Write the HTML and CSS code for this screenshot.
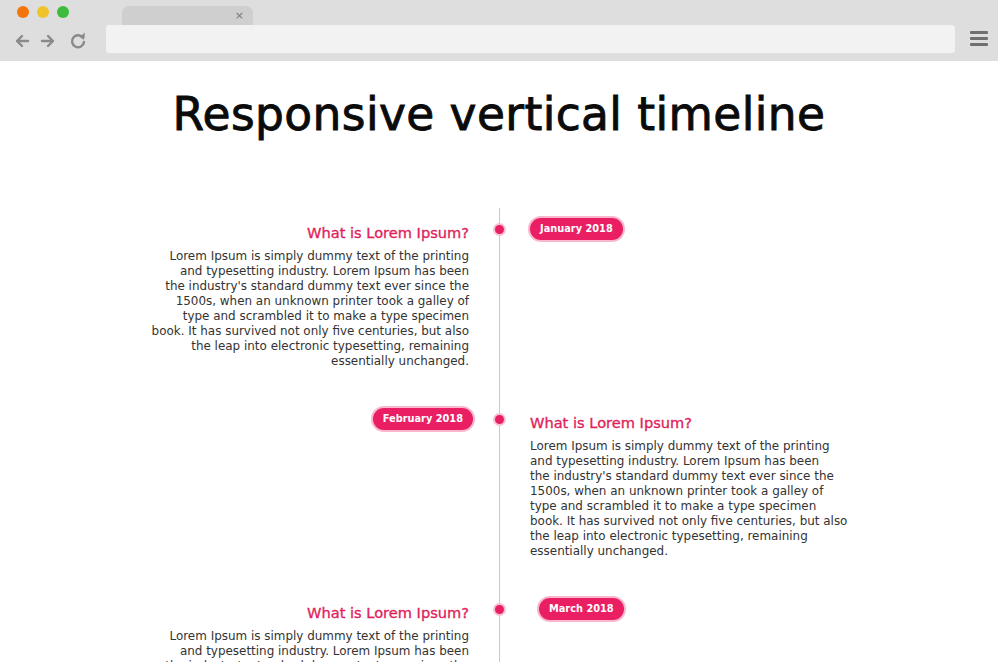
FILE: index.html
```html
<!DOCTYPE html>
<html lang="en">
<head>
<meta charset="utf-8">
<title>Responsive vertical timeline</title>
<link rel="stylesheet" href="styles.css">
</head>
<body>
<div class="chrome">
  <div class="chrome-top">
    <div class="lights">
      <span class="light red"></span>
      <span class="light yellow"></span>
      <span class="light green"></span>
    </div>
    <div class="tab"><span class="tab-close">×</span></div>
  </div>
  <div class="chrome-bar">
    <div class="nav">
      <svg class="nav-icon" width="16" height="16" viewBox="0 0 16 16"><path d="M14 8H3M8 3L3 8l5 5" fill="none" stroke="#8a8a8a" stroke-width="2.4" stroke-linecap="round" stroke-linejoin="round"/></svg>
      <svg class="nav-icon" width="16" height="16" viewBox="0 0 16 16"><path d="M2 8h11M8 3l5 5-5 5" fill="none" stroke="#8a8a8a" stroke-width="2.4" stroke-linecap="round" stroke-linejoin="round"/></svg>
      <svg class="nav-icon reload" width="18" height="18" viewBox="0 0 18 18"><path d="M14.2 6.2A6 6 0 1 0 15 10" fill="none" stroke="#8a8a8a" stroke-width="2.4" stroke-linecap="round"/><path d="M10.5 5.6h5.2V0.6z" fill="#8a8a8a"/></svg>
    </div>
    <div class="url"></div>
    <div class="menu"><span></span><span></span><span></span></div>
  </div>
</div>

<main class="page">
  <h1 class="title">Responsive vertical timeline</h1>

  <section class="timeline">
    <div class="item item-1">
      <div class="side left">
        <div class="content">
          <h2 class="heading">What is Lorem Ipsum?</h2>
          <p class="text">Lorem Ipsum is simply dummy text of the printing<br>and typesetting industry. Lorem Ipsum has been<br>the industry's standard dummy text ever since the<br>1500s, when an unknown printer took a galley of<br>type and scrambled it to make a type specimen<br>book. It has survived not only five centuries, but also<br>the leap into electronic typesetting, remaining<br>essentially unchanged.</p>
        </div>
      </div>
      <span class="dot"></span>
      <div class="side right">
        <span class="badge badge-jan">January 2018</span>
      </div>
    </div>

    <div class="item item-2">
      <div class="side left">
        <span class="badge badge-feb">February 2018</span>
      </div>
      <span class="dot"></span>
      <div class="side right">
        <div class="content">
          <h2 class="heading">What is Lorem Ipsum?</h2>
          <p class="text">Lorem Ipsum is simply dummy text of the printing<br>and typesetting industry. Lorem Ipsum has been<br>the industry's standard dummy text ever since the<br>1500s, when an unknown printer took a galley of<br>type and scrambled it to make a type specimen<br>book. It has survived not only five centuries, but also<br>the leap into electronic typesetting, remaining<br>essentially unchanged.</p>
        </div>
      </div>
    </div>

    <div class="item item-3">
      <div class="side left">
        <div class="content">
          <h2 class="heading">What is Lorem Ipsum?</h2>
          <p class="text">Lorem Ipsum is simply dummy text of the printing<br>and typesetting industry. Lorem Ipsum has been<br>the industry's standard dummy text ever since the<br>1500s, when an unknown printer took a galley of<br>type and scrambled it to make a type specimen<br>book. It has survived not only five centuries, but also<br>the leap into electronic typesetting, remaining<br>essentially unchanged.</p>
        </div>
      </div>
      <span class="dot"></span>
      <div class="side right">
        <span class="badge badge-mar">March 2018</span>
      </div>
    </div>
  </section>
</main>
</body>
</html>
```

FILE: styles.css
```css
* { box-sizing: border-box; }
html, body { margin: 0; padding: 0; }
body {
  width: 998px;
  height: 662px;
  overflow: hidden;
  background: #fff;
  font-family: "DejaVu Sans", sans-serif;
  color: #222;
}

/* Browser chrome */
.chrome {
  background: #dedede;
  height: 61px;
  display: flex;
  flex-direction: column;
}
.chrome-top {
  height: 25px;
  display: flex;
  align-items: flex-end;
}
.lights {
  display: flex;
  gap: 8px;
  padding-left: 17px;
  align-self: flex-start;
  padding-top: 6px;
}
.light { width: 12px; height: 12px; border-radius: 50%; display: block; }
.red { background: #f4750c; }
.yellow { background: #efc42a; }
.green { background: #3cbb3c; }
.tab {
  margin-left: 53px;
  width: 131px;
  height: 19px;
  background: #cfcfcf;
  border-radius: 7px 7px 0 0;
  display: flex;
  justify-content: flex-end;
  align-items: center;
  padding-right: 9px;
}
.tab-close { font-family: "DejaVu Sans", sans-serif; font-size: 11px; color: #777; line-height: 1; }
.chrome-bar {
  flex: 1;
  display: flex;
  align-items: flex-start;
}
.nav {
  display: flex;
  align-items: center;
  gap: 10px;
  padding-left: 14px;
  padding-top: 7px;
  width: 106px;
}
.nav-icon { display: block; }
.reload { margin-left: 3px; }
.url {
  width: 849px;
  height: 28px;
  background: #f2f2f2;
  border-radius: 3px;
}
.menu {
  display: flex;
  flex-direction: column;
  gap: 3px;
  margin-left: 15px;
  padding-top: 6px;
}
.menu span { display: block; width: 18px; height: 3px; background: #6f6f6f; border-radius: 1px; }

/* Page */
.page { padding-top: 26px; }
.title {
  margin: 0;
  text-align: center;
  font-weight: 400;
  font-size: 45.5px;
  line-height: 56px;
  color: #0b0b0b;
  letter-spacing: 0.4px;
  -webkit-text-stroke: 0.9px #0b0b0b;
}

.timeline {
  position: relative;
  margin-top: 65px;
  padding-top: 8px;
}
.timeline::before {
  content: "";
  position: absolute;
  left: 499px;
  top: 0;
  bottom: 0;
  width: 1px;
  background: #c9c9c9;
}
.item {
  position: relative;
  display: grid;
  grid-template-columns: 499px 499px;
  min-height: 190px;
}
.dot {
  position: absolute;
  left: 495px;
  top: 9px;
  width: 9px;
  height: 9px;
  border-radius: 50%;
  background: #e91e63;
  box-shadow: 0 0 0 2px #f7c0d3;
}
.side.left { display: flex; justify-content: flex-end; padding-right: 30px; }
.side.right { display: flex; justify-content: flex-start; padding-left: 31px; }

.content { width: 340px; }
.left .content { text-align: right; }
.heading {
  margin: 0;
  font-size: 14.6px;
  font-weight: 400;
  color: #e01f5c;
  line-height: 20px;
  padding-top: 7px;
  -webkit-text-stroke: 0.35px #e01f5c;
}
.text {
  margin: 6px 0 0;
  font-size: 11.95px;
  line-height: 15px;
  font-weight: 400;
  color: #333;
  white-space: nowrap;
}

.badge {
  display: inline-block;
  align-self: flex-start;
  background: #e91e63;
  color: #fff;
  font-weight: 700;
  font-size: 9.8px;
  line-height: 18px;
  padding: 2px 10px;
  border: 2px solid #f9b6cd;
  border-radius: 14px;
  white-space: nowrap;
}
.badge-jan { margin-left: -2px; }
.badge-feb { margin-right: -6px; margin-left: -3px; }
.badge-mar { margin-left: 7px; }
```
